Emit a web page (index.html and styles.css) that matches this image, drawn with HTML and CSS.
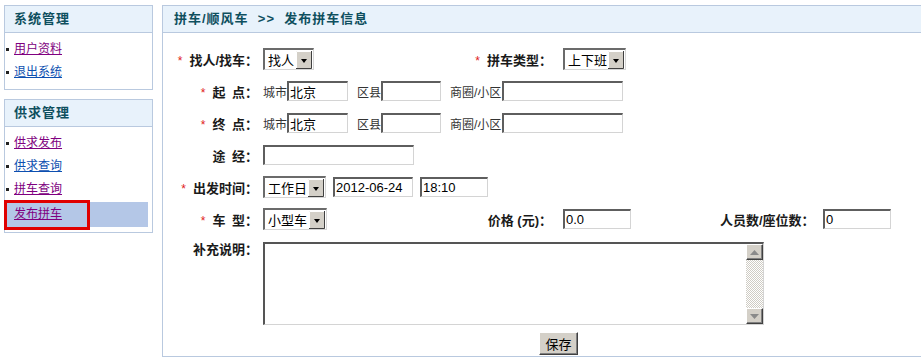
FILE: index.html
```html
<!DOCTYPE html>
<html lang="zh-CN">
<head>
  <meta charset="UTF-8" />
  <title>发布拼车信息</title>
  <link rel="stylesheet" href="styles.css">
</head>
<body>
  <div class="page">
    <aside class="side">
      <div class="box">
        <h3 class="box-title">系统管理</h3>
        <ul class="menu">
          <li><a class="seen" href="#">用户资料</a></li>
          <li><a href="#">退出系统</a></li>
        </ul>
      </div>
      <div class="box">
        <h3 class="box-title">供求管理</h3>
        <ul class="menu">
          <li><a class="seen" href="#">供求发布</a></li>
          <li><a href="#">供求查询</a></li>
          <li><a class="seen" href="#">拼车查询</a></li>
          <li class="current"><a class="seen" href="#">发布拼车</a></li>
        </ul>
      </div>
    </aside>

    <main class="panel">
      <h2 class="panel-title">拼车/顺风车 &nbsp;&gt;&gt;&nbsp; 发布拼车信息</h2>

      <form class="form">
        <div class="row">
          <label class="lbl"><span class="req">*</span>找人/找车：</label>
          <div class="col-a">
            <select class="sel sel-s"><option>找人</option><option>找车</option></select>
          </div>
          <label class="lbl-b"><span class="req">*</span>拼车类型：</label>
          <div class="col-b">
            <select class="sel sel-m"><option>上下班</option></select>
          </div>
        </div>

        <div class="row">
          <label class="lbl"><span class="req">*</span>起&ensp;点：</label>
          <span class="hint">城市</span><input class="txt w-city" type="text" value="北京">
          <span class="hint gap">区县</span><input class="txt w-dist" type="text">
          <span class="hint gap">商圈/小区</span><input class="txt w-area" type="text">
        </div>

        <div class="row">
          <label class="lbl"><span class="req">*</span>终&ensp;点：</label>
          <span class="hint">城市</span><input class="txt w-city" type="text" value="北京">
          <span class="hint gap">区县</span><input class="txt w-dist" type="text">
          <span class="hint gap">商圈/小区</span><input class="txt w-area" type="text">
        </div>

        <div class="row">
          <label class="lbl">途&ensp;经：</label>
          <input class="txt w-via" type="text">
        </div>

        <div class="row">
          <label class="lbl"><span class="req">*</span>出发时间：</label>
          <div class="inline">
            <select class="sel sel-m"><option>工作日</option></select>
            <input class="txt w-date" type="text" value="2012-06-24">
            <input class="txt w-small" type="text" value="18:10">
          </div>
        </div>

        <div class="row">
          <label class="lbl"><span class="req">*</span>车&ensp;型：</label>
          <div class="col-a">
            <select class="sel sel-l"><option>小型车</option></select>
          </div>
          <label class="lbl-b">价格 (元)：</label>
          <div class="col-b">
            <input class="txt w-small" type="text" value="0.0">
          </div>
          <label class="lbl-c">人员数/座位数：</label>
          <input class="txt w-small" type="text" value="0">
        </div>

        <div class="row-top">
          <label class="lbl">补充说明：</label>
          <div class="memo-wrap">
            <textarea class="memo"></textarea>
            <div class="vscroll">
              <span class="sb-btn">
                <svg width="9" height="5" viewBox="0 0 9 5"><path d="M0 5h9L4.5 0z" fill="#8a8a8a"/></svg>
              </span>
              <span class="sb-track"></span>
              <span class="sb-btn">
                <svg width="9" height="5" viewBox="0 0 9 5"><path d="M0 0h9L4.5 5z" fill="#8a8a8a"/></svg>
              </span>
            </div>
          </div>
        </div>

        <div class="actions">
          <button type="button" class="btn">保存</button>
        </div>
      </form>
    </main>
  </div>
</body>
</html>
```

FILE: styles.css
```css
body {
  margin: 0;
  font-family: "Liberation Sans", "Noto Sans CJK SC", sans-serif;
  font-size: 12px;
  color: #222;
  background: #fff;
  overflow: hidden;
}
.page {
  display: flex;
  align-items: flex-start;
  padding: 5px 0 0 4px;
  gap: 9px;
}

/* sidebar */
.side {
  width: 149px;
  flex: none;
}
.box {
  border: 1px solid #b9c9df;
  margin-bottom: 9px;
}
.box-title {
  margin: 0;
  height: 26px;
  line-height: 26px;
  padding-left: 9px;
  background: #e8f2fb;
  border-bottom: 1px solid #b9c9df;
  font-size: 13px;
  font-weight: bold;
  letter-spacing: 1px;
  color: #0e4f5e;
}
.menu {
  list-style: none;
  margin: 0;
  padding: 5px 0 5px;
}
.menu li {
  height: 23px;
  line-height: 23px;
  padding-left: 1px;
}
.menu li::before {
  content: "";
  display: inline-block;
  width: 3px;
  height: 3px;
  background: #222;
  vertical-align: middle;
  margin-right: 5px;
}
.menu a {
  color: #0d4fb0;
}
.menu a.seen {
  color: #800080;
}
.menu li.current {
  position: relative;
  height: 25px;
  line-height: 25px;
  margin: 1px 4px 0 0;
  padding-left: 9px;
  background: #b4c7e7;
}
.menu li.current::before {
  display: none;
}
.menu li.current::after {
  content: "";
  position: absolute;
  left: -1px;
  top: -2px;
  width: 86px;
  height: 30px;
  border: 3px solid #e00000;
  box-sizing: border-box;
}

/* main panel */
.panel {
  flex: 1;
  border: 1px solid #b9c9df;
  border-right: none;
}
.panel-title {
  margin: 0;
  height: 26px;
  line-height: 26px;
  padding-left: 11px;
  background: #e8f2fb;
  border-bottom: 1px solid #b9c9df;
  font-size: 13px;
  font-weight: bold;
  letter-spacing: 1px;
  color: #0e4f5e;
}
.form {
  padding: 10px 0 1px;
}
.row {
  display: flex;
  align-items: center;
  height: 32px;
}
.row-top {
  display: flex;
  align-items: flex-start;
  margin-top: 7px;
}
.lbl, .lbl-b, .lbl-c {
  flex: none;
  text-align: right;
  font-size: 13px;
  font-weight: bold;
  color: #1a1a1a;
  white-space: nowrap;
}
.lbl {
  width: 95px;
  margin-right: 5px;
}
.row-top .lbl {
  line-height: 14px;
  margin-top: 1px;
}
.lbl-b {
  width: 89px;
  margin-right: 11px;
}
.lbl-c {
  width: 93px;
  margin-right: 10px;
}
.req {
  color: #e02020;
  font-size: 12px;
  font-weight: normal;
  margin-right: 7px;
}
.col-a {
  width: 200px;
  flex: none;
}
.col-b {
  width: 157px;
  flex: none;
}
.inline {
  display: flex;
  align-items: center;
  gap: 7px;
}
.hint {
  color: #333;
}
.hint.gap {
  margin-left: 9px;
}

/* controls */
.sel {
  appearance: none;
  -webkit-appearance: none;
  height: 22px;
  box-sizing: border-box;
  border-style: solid;
  border-width: 2px 1px 1px 2px;
  border-color: #6b6b6b #d6d6d6 #d6d6d6 #6b6b6b;
  border-radius: 0;
  padding: 0 18px 0 3px;
  font-family: "Noto Sans CJK SC", sans-serif;
  font-size: 13px;
  color: #000;
  background: #fff url("data:image/svg+xml,%3Csvg xmlns='http://www.w3.org/2000/svg' width='16' height='18'%3E%3Crect width='16' height='18' fill='%23d4d0c8'/%3E%3Cpath d='M0.5 17V0.5H15.5' fill='none' stroke='%23fff'/%3E%3Cpath d='M0 17.5H15.5V0' fill='none' stroke='%23404040'/%3E%3Cpath d='M5 8h6l-3 4z' fill='%23000'/%3E%3C/svg%3E") no-repeat right 1px center;
}
.sel-s { width: 51px; }
.sel-m { width: 63px; }
.sel-l { width: 64px; }

.txt {
  height: 20px;
  box-sizing: border-box;
  border-style: solid;
  border-width: 2px 1px 1px 2px;
  border-color: #5e5e5e #d4d4d4 #d4d4d4 #5e5e5e;
  padding: 0 1px;
  margin: 0;
  font-family: "Liberation Sans", "Noto Sans CJK SC", sans-serif;
  font-size: 13px;
  color: #000;
  background: #fff;
}
.w-city { width: 61px; }
.w-dist { width: 60px; }
.w-area { width: 121px; margin-left: 1px; }
.w-via { width: 151px; }
.w-date { width: 80px; }
.w-small { width: 68px; }

.memo-wrap {
  position: relative;
  width: 501px;
  height: 83px;
}
.memo {
  display: block;
  width: 501px;
  height: 83px;
  box-sizing: border-box;
  margin: 0;
  padding: 2px 20px 2px 2px;
  border-style: solid;
  border-width: 2px 1px 1px 2px;
  border-color: #555 #d4d4d4 #d4d4d4 #555;
  resize: none;
  overflow: hidden;
  font-size: 13px;
}
.vscroll {
  position: absolute;
  top: 2px;
  right: 1px;
  bottom: 1px;
  width: 17px;
  display: flex;
  flex-direction: column;
}
.sb-track {
  flex: 1;
  background: repeating-conic-gradient(#fff 0 25%, #cfccc4 0 50%) 0 0 / 2px 2px;
}
.sb-btn {
  height: 16px;
  flex: none;
  box-sizing: border-box;
  display: flex;
  align-items: center;
  justify-content: center;
  background: #d4d0c8;
  border-style: solid;
  border-width: 1px;
  border-color: #fff #404040 #404040 #fff;
  box-shadow: inset -1px -1px 0 #808080;
}

.actions {
  padding-left: 376px;
  margin-top: 7px;
  height: 23px;
}
.btn {
  width: 39px;
  height: 23px;
  padding: 0;
  border-style: solid;
  border-width: 1px;
  border-color: #fff #404040 #404040 #fff;
  box-shadow: inset -1px -1px 0 #808080;
  background: #d4d0c8;
  font-family: "Noto Sans CJK SC", sans-serif;
  font-size: 13px;
  color: #000;
}
```
